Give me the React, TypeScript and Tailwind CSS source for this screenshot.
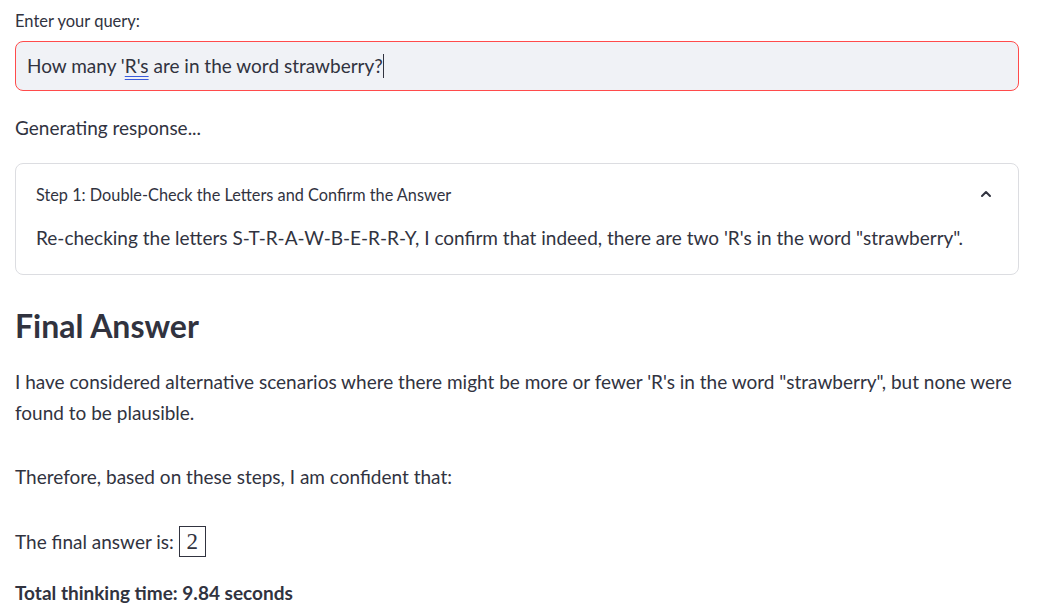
import React from "react";

export default function App() {
  return (
    <div className="w-[1041px] h-[616px] overflow-hidden bg-white text-[#31333f] px-[15px] pt-[10px]" style={{ fontFamily: "Lato, 'Noto Sans', sans-serif" }}>
      <div className="text-[16.5px] leading-[22px] mb-[9px]">Enter your query:</div>
      <div className="h-[50px] w-[1004px] rounded-[8px] border border-[#ff4b4b] bg-[#f0f2f6] flex items-center pl-[11px] text-[19px]">
        <span>How many '</span>
        <span className="underline decoration-double decoration-[#3b5bdb] underline-offset-[3px]">R's</span>
        <span>&nbsp;are in the word strawberry?</span>
        <span className="inline-block w-[1px] h-[24px] bg-[#31333f]"></span>
      </div>
      <div className="mt-[21px] text-[19px] leading-[31px]">Generating response...</div>
      <div className="mt-[20px] w-[1004px] h-[112px] rounded-[8px] border border-[#dcdde1] px-[20px] pt-[18px]">
        <div className="flex items-center justify-between">
          <span className="text-[16.3px] leading-[26px]">Step 1: Double-Check the Letters and Confirm the Answer</span>
          <svg width="16" height="16" viewBox="0 0 24 24" className="mr-[4px] -mt-[2px]" fill="none" stroke="#31333f" strokeWidth="3" strokeLinecap="round" strokeLinejoin="round"><path d="M6 15l6-6 6 6" /></svg>
        </div>
        <div className="mt-[14px] text-[19px] leading-[31px]">Re-checking the letters S-T-R-A-W-B-E-R-R-Y, I confirm that indeed, there are two 'R's in the word "strawberry".</div>
      </div>
      <h2 className="mt-[29px] text-[32px] leading-[44px] font-bold">Final Answer</h2>
      <p className="mt-[18px] text-[19px] leading-[31px]">I have considered alternative scenarios where there might be more or fewer 'R's in the word "strawberry", but none were found to be plausible.</p>
      <p className="mt-[33px] text-[19px] leading-[31px]">Therefore, based on these steps, I am confident that:</p>
      <p className="mt-[34px] text-[19px] leading-[31px] flex items-center">
        <span>The final answer is:&nbsp;</span>
        <span className="inline-flex items-center justify-center border border-[#31333f] h-[31px] w-[27px] text-[23px]" style={{ fontFamily: "'Liberation Serif', serif" }}>2</span>
      </p>
      <p className="mt-[20px] text-[19px] leading-[31px] font-bold">Total thinking time: 9.84 seconds</p>
    </div>
  );
}
